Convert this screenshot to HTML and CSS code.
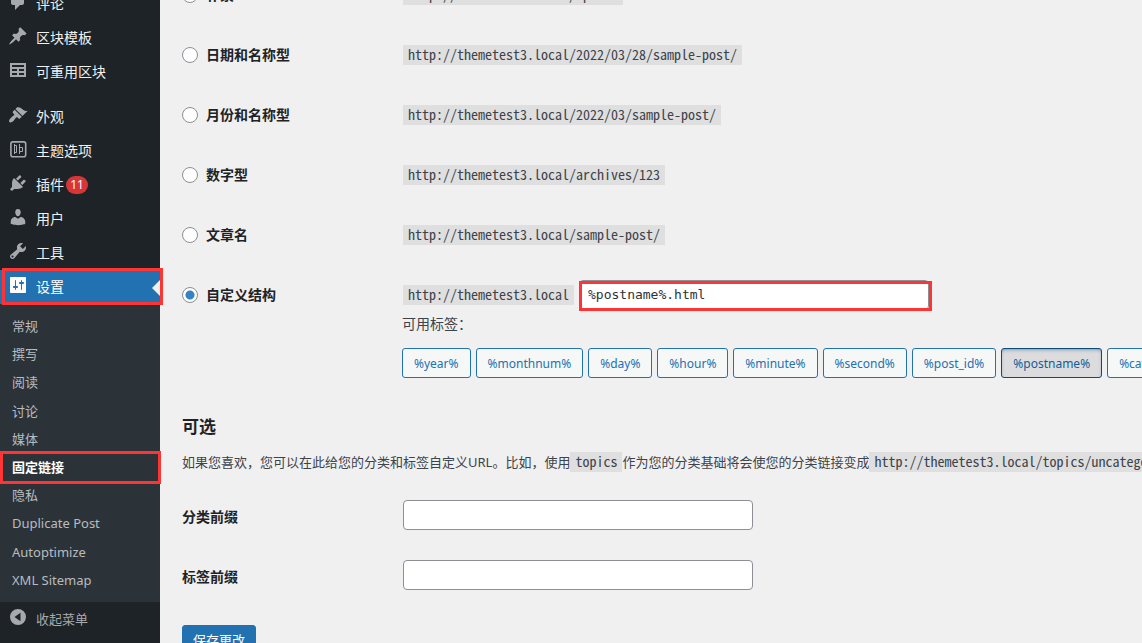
FILE: index.html
```html
<!DOCTYPE html>
<html lang="zh-CN">
<head>
<meta charset="utf-8">
<title>固定链接设置</title>
<link rel="stylesheet" href="styles.css">
</head>
<body>
<div class="layout">
  <nav class="sidebar" aria-label="主菜单">
    <ul class="menu">
      <li><a class="menu-link" href="#"><svg class="icon" viewBox="0 0 20 20"><path d="M5 2h9c1.1 0 2 .9 2 2v7c0 1.1-.9 2-2 2h-2l-5 5v-5H5c-1.1 0-2-.9-2-2V4c0-1.1.9-2 2-2z"/></svg>评论</a></li>
      <li><a class="menu-link" href="#"><svg class="icon" viewBox="0 0 20 20"><path d="M10.44 3.02l1.82-1.82 6.36 6.35-1.83 1.82c-1.05-.68-2.48-.57-3.41.36l-.75.75c-.92.93-1.04 2.35-.35 3.41l-1.83 1.82-2.41-2.41-2.8 2.79c-.42.42-3.38 2.71-3.8 2.29s1.86-3.39 2.28-3.81l2.79-2.79L4.1 9.36l1.83-1.82c1.05.69 2.48.57 3.4-.36l.75-.75c.93-.92 1.05-2.35.36-3.41z"/></svg>区块模板</a></li>
      <li><a class="menu-link" href="#"><svg class="icon" viewBox="0 0 20 20"><path d="M18 17V3H2v14h16zM16 7H4V5h12v2zm-7 4H4V9h5v2zm7 0h-5V9h5v2zm-7 4H4v-2h5v2zm7 0h-5v-2h5v2z"/></svg>可重用区块</a></li>
      <li class="separated"><a class="menu-link" href="#"><svg class="icon" viewBox="0 0 20 20"><path d="M14.48 11.06L7.41 3.99l1.5-1.5c.5-.56 2.3-.47 3.51.32 1.21.8 1.43 1.28 2.91 2.1 1.18.64 2.45 1.26 4.45.85zm-.71.71L6.7 4.7 4.93 6.47c-.39.39-.39 1.02 0 1.41l1.06 1.06c.39.39.39 1.03 0 1.42-.6.6-1.43 1.11-2.21 1.69-.35.26-.7.53-1.01.84C1.43 14.23.4 16.08 1.4 17.07c.99 1 2.84-.03 4.18-1.36.31-.31.58-.66.85-1.02.57-.78 1.08-1.61 1.69-2.21.39-.39 1.02-.39 1.41 0l1.06 1.06c.39.39 1.02.39 1.41 0z"/></svg>外观</a></li>
      <li><a class="menu-link" href="#"><svg class="icon icon-line" viewBox="0 0 20 20"><rect x="2.9" y="2.9" width="14.8" height="14.8" rx="2"/><path class="thin" d="M6.500 5v10M6.500 6.500h2v7h-2M11.500 5v10M11.500 8.500h3v4h-3"/></svg>主题选项</a></li>
      <li><a class="menu-link" href="#"><svg class="icon" viewBox="0 0 20 20"><path d="M13.11 4.36L9.87 7.6 8 5.73l3.24-3.24c.35-.34 1.05-.2 1.56.32.52.51.66 1.21.31 1.55zm-8 1.77l.91-1.12 9.01 9.01-1.19.84c-.71.71-2.63 1.16-3.82 1.16H6.14L4.9 17.26c-.59.59-1.54.59-2.12 0-.59-.58-.59-1.53 0-2.12l1.24-1.24v-3.88c0-1.13.4-3.19 1.09-3.89zm7.26 3.97l3.24-3.24c.34-.35 1.04-.21 1.55.31.52.51.66 1.21.31 1.55l-3.24 3.25z"/></svg>插件<span class="badge">11</span></a></li>
      <li><a class="menu-link" href="#"><svg class="icon" viewBox="0 0 20 20"><path d="M10 9.250c-2.270 0-2.730-3.440-2.730-3.440C7 4.020 7.820 2 9.970 2c2.160 0 2.980 2.020 2.710 3.810 0 0-.41 3.440-2.680 3.440zm0 2.570L12.720 10c2.390 0 4.520 2.330 4.520 4.530v2.490s-3.650 1.130-7.240 1.130c-3.650 0-7.240-1.130-7.240-1.130v-2.490c0-2.250 1.940-4.480 4.470-4.480z"/></svg>用户</a></li>
      <li><a class="menu-link" href="#"><svg class="icon" viewBox="0 0 20 20"><path d="M16.68 9.77c-1.34 1.34-3.3 1.67-4.95.99l-5.41 6.52c-.99.99-2.59.99-3.58 0s-.99-2.59 0-3.57l6.52-5.42c-.68-1.65-.35-3.61.99-4.95 1.28-1.28 3.12-1.62 4.72-1.06l-2.89 2.89 2.82 2.82 2.86-2.87c.53 1.58.18 3.39-1.08 4.65zM3.81 16.21c.4.39 1.04.39 1.43 0 .4-.4.4-1.04 0-1.43-.39-.4-1.03-.4-1.43 0-.39.39-.39 1.03 0 1.43z"/></svg>工具</a></li>
      <li>
        <a class="menu-link current" href="#"><svg class="icon" viewBox="0 0 20 20"><path d="M18 17V3c0-.55-.45-1-1-1H3c-.55 0-1 .45-1 1v14c0 .55.45 1 1 1h14c.55 0 1-.45 1-1zM8 11h1c.55 0 1 .45 1 1s-.45 1-1 1H8v1.5c0 .28-.22.5-.5.5s-.5-.22-.5-.5V13H6c-.55 0-1-.45-1-1s.45-1 1-1h1V5.500c0-.28.22-.5.5-.5s.5.22.5.5V11zm5-2h-1c-.55 0-1-.45-1-1s.45-1 1-1h1V5.500c0-.28.22-.5.5-.5s.5.22.5.5V7h1c.55 0 1 .45 1 1s-.45 1-1 1h-1v5.500c0 .28-.22.5-.5.5s-.5-.22-.5-.5V9z"/></svg>设置</a>
        <ul class="submenu">
          <li><a href="#">常规</a></li>
          <li><a href="#">撰写</a></li>
          <li><a href="#">阅读</a></li>
          <li><a href="#">讨论</a></li>
          <li><a href="#">媒体</a></li>
          <li><a class="active" href="#">固定链接</a></li>
          <li><a href="#">隐私</a></li>
          <li><a href="#">Duplicate Post</a></li>
          <li><a href="#">Autoptimize</a></li>
          <li><a href="#">XML Sitemap</a></li>
        </ul>
      </li>
    </ul>
    <button class="collapse" type="button"><svg class="icon" viewBox="0 0 20 20"><path fill-rule="evenodd" d="M10 2a8 8 0 1 0 0 16 8 8 0 0 0 0-16zM12.500 5.800v8.400L6.500 10z"/></svg>收起菜单</button>
  </nav>

  <main class="content">
    <form>
      <div class="row">
        <label class="choice"><input type="radio" name="structure">朴素</label>
        <div class="field"><code>http://themetest3.local/?p=123</code></div>
      </div>
      <div class="row">
        <label class="choice"><input type="radio" name="structure">日期和名称型</label>
        <div class="field"><code>http://themetest3.local/2022/03/28/sample-post/</code></div>
      </div>
      <div class="row">
        <label class="choice"><input type="radio" name="structure">月份和名称型</label>
        <div class="field"><code>http://themetest3.local/2022/03/sample-post/</code></div>
      </div>
      <div class="row">
        <label class="choice"><input type="radio" name="structure">数字型</label>
        <div class="field"><code>http://themetest3.local/archives/123</code></div>
      </div>
      <div class="row">
        <label class="choice"><input type="radio" name="structure">文章名</label>
        <div class="field"><code>http://themetest3.local/sample-post/</code></div>
      </div>
      <div class="row">
        <label class="choice"><input type="radio" name="structure" checked>自定义结构</label>
        <div>
          <div class="field">
            <code>http://themetest3.local</code>
            <span class="marked"><input class="text mono" type="text" value="%postname%.html" aria-label="自定义结构"></span>
          </div>
          <p class="hint">可用标签：</p>
          <div class="tags">
            <button type="button">%year%</button>
            <button type="button">%monthnum%</button>
            <button type="button">%day%</button>
            <button type="button">%hour%</button>
            <button type="button">%minute%</button>
            <button type="button">%second%</button>
            <button type="button">%post_id%</button>
            <button type="button" class="pressed" aria-pressed="true">%postname%</button>
            <button type="button">%category%</button>
          </div>
        </div>
      </div>

      <h2>可选</h2>
      <p class="note">如果您喜欢，您可以在此给您的分类和标签自定义URL。比如，使用<code>topics</code>作为您的分类基础将会使您的分类链接变成<code>http://themetest3.local/topics/uncategorized/</code></p>

      <div class="row optional">
        <label for="category-base">分类前缀</label>
        <div><input class="text" id="category-base" type="text"></div>
      </div>
      <div class="row optional">
        <label for="tag-base">标签前缀</label>
        <div><input class="text" id="tag-base" type="text"></div>
      </div>
      <button class="save" type="submit">保存更改</button>
    </form>
  </main>
</div>
</body>
</html>
```
FILE: styles.css
```css
* { box-sizing: border-box; }

body {
  margin: 0;
  height: 100vh;
  overflow: hidden;
  background: #f0f0f1;
  color: #3c434a;
  font: 13px/20px "Noto Sans", "Noto Sans CJK SC", sans-serif;
}

ul, p, h2 { margin: 0; padding: 0; }
ul { list-style: none; }
a { color: inherit; text-decoration: none; }
button, input { font: inherit; }

.layout { display: flex; min-height: 100vh; }

/* Sidebar */
.sidebar {
  flex: 0 0 160px;
  background: #1d2327;
  color: #f0f0f1;
}
.menu { margin-top: -13px; }
.menu-link {
  position: relative;
  display: flex;
  align-items: center;
  height: 34px;
  padding-left: 8px;
  font-size: 14px;
}
.separated { margin-top: 11px; }
.icon {
  width: 20px;
  height: 20px;
  margin: 0 8px 4px 0;
  fill: #a7aaad;
}
.icon-line { fill: none; stroke: #a7aaad; stroke-width: 1.6; }
.thin { stroke-width: 1; }
.badge {
  min-width: 22px;
  margin-left: 2px;
  border-radius: 9px;
  background: #d63638;
  color: #fff;
  font-size: 12px;
  line-height: 18px;
  text-align: center;
}
.current { background: #2271b1; color: #fff; }
.current .icon { fill: #fff; }
.current::before {
  content: "";
  position: absolute;
  right: 0;
  top: 10px;
  border: 8px solid transparent;
  border-right-color: #f0f0f1;
  border-left-width: 0;
}
.current::after, .active::after, .marked::after {
  content: "";
  position: absolute;
  border: 3px solid #ff3434;
  pointer-events: none;
}
.current::after { inset: -2px -3px -1px 2px; z-index: 1; }
.submenu {
  padding: 8px 0;
  background: #2c3338;
  color: #b8bcc0;
}
.submenu a {
  position: relative;
  display: block;
  padding: 5px 12px;
  line-height: 1.4;
}
.submenu .active { color: #fff; font-weight: 600; }
.active::after { inset: -2px -1px -3px 0; z-index: 1; }
.collapse {
  display: flex;
  align-items: center;
  width: 100%;
  height: 34px;
  padding: 0 0 0 8px;
  border: 0;
  background: none;
  color: #a7aaad;
}

/* Settings form */
.content {
  flex: 1;
  min-width: 0;
  padding-left: 22px;
}
.content form { margin-top: -35px; }
.row {
  display: grid;
  grid-template-columns: 220px minmax(0, 1fr);
  padding: 15px 0;
  line-height: 30px;
}
.row label { color: #1d2327; font-size: 14px; font-weight: 600; }
.choice { display: flex; align-items: center; align-self: start; }
.choice input {
  appearance: none;
  width: 16px;
  height: 16px;
  margin: 0 8px 0 0;
  border: 1px solid #8c8f94;
  border-radius: 50%;
  background: #fff;
}
.choice input:checked { background: radial-gradient(circle, #3582c4 4px, #fff 5px); }
code {
  display: inline-block;
  padding: 2px 5px 4px;
  background: #dfdfe0;
  color: #3c434a;
  font-family: "Noto Sans Mono CJK SC", "DejaVu Sans Mono", monospace;
  font-size: 14px;
  line-height: 14px;
}
.field {
  display: flex;
  align-items: center;
  gap: 5px;
  height: 30px;
  padding-left: 1px;
}
.marked { position: relative; display: flex; }
.marked::after { inset: 1px -3px -1px 0; }
.text {
  width: 350px;
  height: 30px;
  padding: 0 8px;
  border: 1px solid #8c8f94;
  border-radius: 4px;
  background: #fff;
  color: #2c3338;
  display: block;
}
.mono {
  font-family: "DejaVu Sans Mono", monospace;
  font-size: 13px;
}
.optional .text { margin-left: 1px; }
.optional label { padding-top: 2px; }
.hint { font-size: 14px; line-height: 28px; }
.tags { display: flex; gap: 5px; padding-top: 10px; overflow: hidden; }
.tags button {
  flex: none;
  height: 30px;
  padding: 0 11px;
  border: 1px solid #2271b1;
  border-radius: 3px;
  background: #f6f7f7;
  color: #2271b1;
  font-size: 12px;
}
.tags .pressed {
  border-color: #0a4b78;
  background: #dcdcde;
  color: #135e96;
  box-shadow: inset 0 2px 5px -3px #0a4b78;
}
h2 {
  margin-top: 20px;
  color: #1d2327;
  font-size: 17px;
  font-weight: 600;
  line-height: 28px;
}
.note {
  height: 20px;
  margin: 11px 0 13px;
  white-space: nowrap;
}
.optional { height: 60px; }
.save {
  margin-top: 20px;
  height: 30px;
  padding: 0 10px;
  border: 1px solid #2271b1;
  border-radius: 3px;
  background: #2271b1;
  color: #fff;
}
```
